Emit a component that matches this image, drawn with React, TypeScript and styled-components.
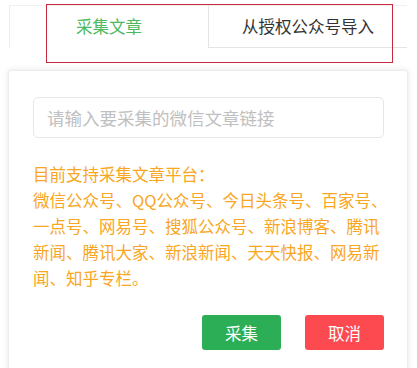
import React from 'react'
import styled, { createGlobalStyle } from 'styled-components'

const GlobalStyle = createGlobalStyle`
	html, body {
		margin: 0;
		padding: 0;
		background: #ffffff;
		font-family: "Noto Sans CJK SC", "Noto Sans", sans-serif;
	}
`

const Page = styled.div`
	position: relative;
	width: 417px;
	height: 368px;
	overflow: hidden;
	background: #ffffff;
`

const TabBar = styled.div`
	display: flex;
	margin: 5px 10px 0 9px;
	height: 43px;
`

const Tab = styled.div<{ active?: boolean }>`
	flex: 1;
	display: flex;
	align-items: center;
	justify-content: center;
	padding-bottom: 1px;
	font-size: 16.5px;
	color: ${(p) => (p.active ? '#4cb960' : '#333333')};
	background: #ffffff;
	border-top: 1px solid #f0f0f0;
	border-left: 1px solid ${(p) => (p.active ? '#ececec' : '#e4e4e4')};
	border-bottom: 1px solid ${(p) => (p.active ? 'transparent' : '#e4e4e4')};
`

const Highlight = styled.div`
	position: absolute;
	left: 46px;
	top: 4px;
	width: 345px;
	height: 57px;
	border: 1px solid #c52a3e;
	pointer-events: none;
`

const Card = styled.div`
	margin: 22px 0 0 8px;
	width: 400px;
	height: 320px;
	box-sizing: border-box;
	padding: 26px 16px 0 24px;
	background: #ffffff;
	border: 1px solid #ededed;
	border-radius: 3px;
	box-shadow: 0 0 6px rgba(0, 0, 0, 0.1);
`

const Input = styled.input`
	display: block;
	width: 351px;
	height: 41px;
	box-sizing: border-box;
	padding: 0 13px;
	border: 1px solid #e6e6e6;
	border-radius: 5px;
	font-family: inherit;
	font-size: 17.5px;
	outline: none;
	&::placeholder {
		color: #c0c0c0;
	}
`

const Notice = styled.div`
	margin-top: 23px;
	font-size: 16.5px;
	line-height: 26px;
	color: #f9a623;
`

const Actions = styled.div`
	display: flex;
	justify-content: flex-end;
	gap: 24px;
	margin-top: 24px;
	padding-right: 7px;
`

const Button = styled.button<{ tone: 'ok' | 'cancel' }>`
	width: 79px;
	height: 35px;
	border: none;
	border-radius: 3px;
	font-family: inherit;
	font-size: 16.5px;
	color: #ffffff;
	background: ${(p) => (p.tone === 'ok' ? '#2bae55' : '#fc4a50')};
`

const App = () => {
	return (
		<Page>
			<GlobalStyle />
			<TabBar>
				<Tab active>采集文章</Tab>
				<Tab>从授权公众号导入</Tab>
			</TabBar>
			<Highlight />
			<Card>
				<Input placeholder="请输入要采集的微信文章链接" />
				<Notice>
					目前支持采集文章平台：
					<br />
					微信公众号、QQ公众号、今日头条号、百家号、一点号、网易号、搜狐公众号、新浪博客、腾讯新闻、腾讯大家、新浪新闻、天天快报、网易新闻、知乎专栏。
				</Notice>
				<Actions>
					<Button tone="ok">采集</Button>
					<Button tone="cancel">取消</Button>
				</Actions>
			</Card>
		</Page>
	)
}

export default App
